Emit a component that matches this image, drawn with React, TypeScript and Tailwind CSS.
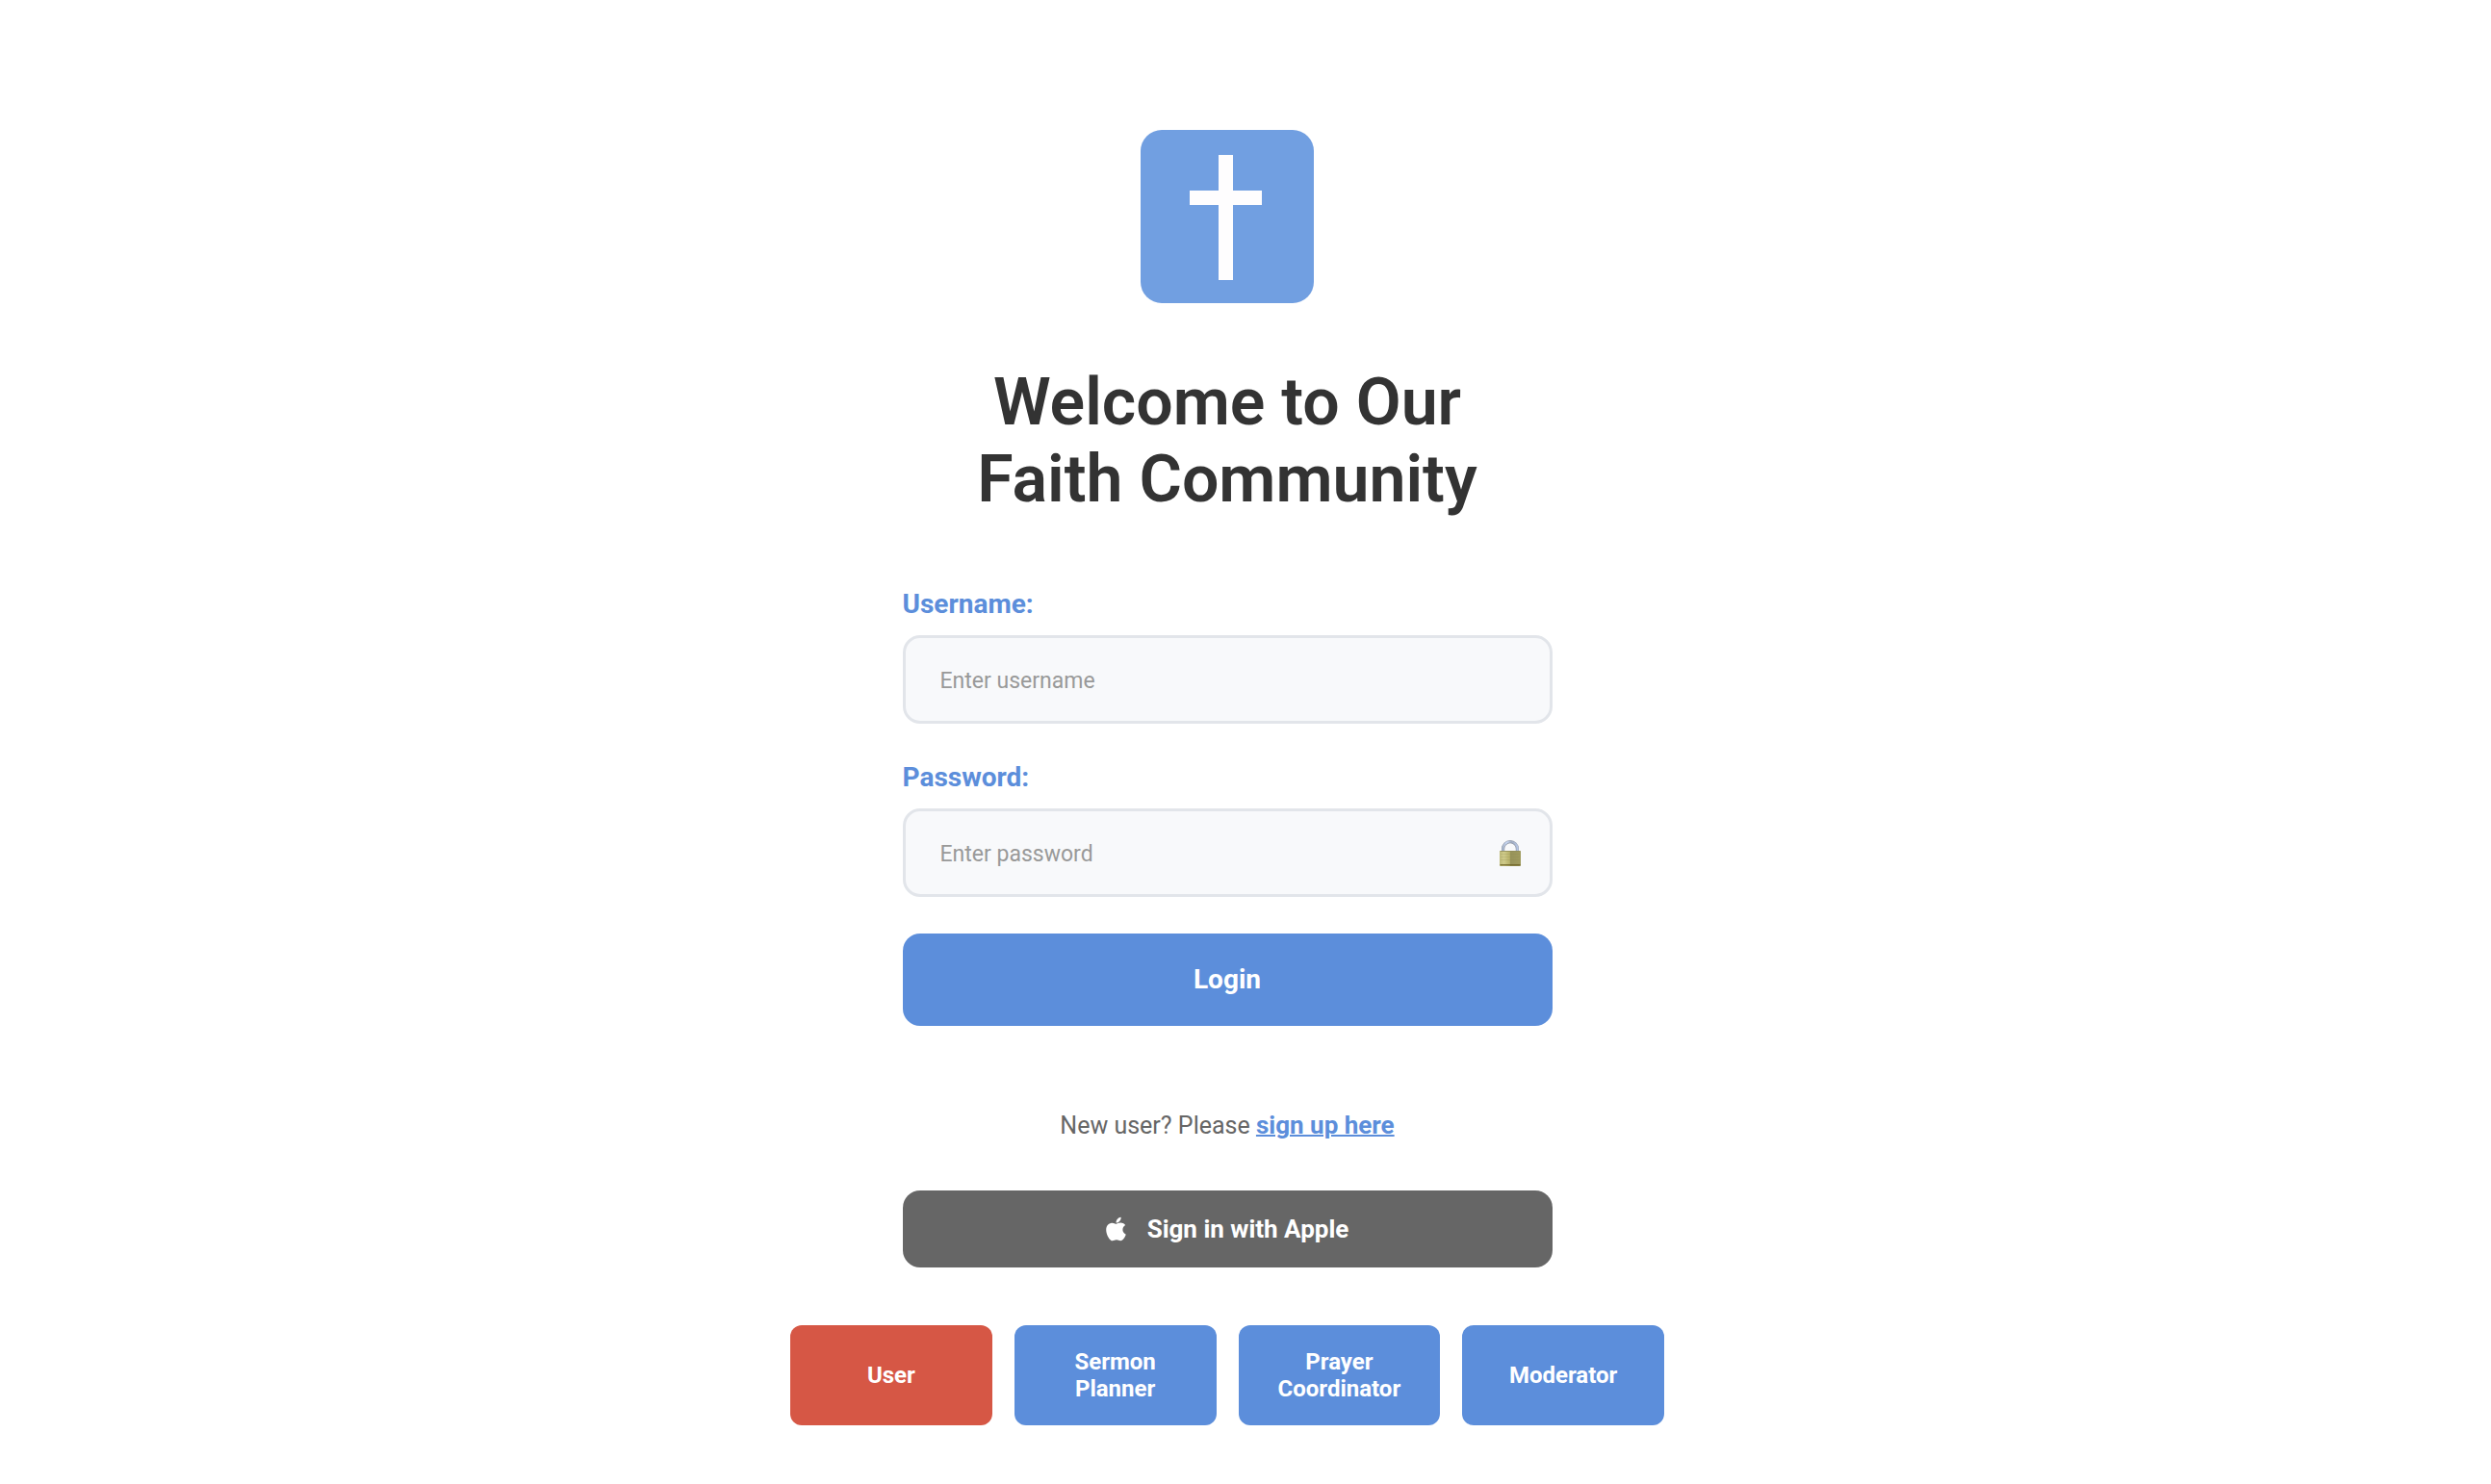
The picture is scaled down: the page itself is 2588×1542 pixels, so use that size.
import { FaApple } from "react-icons/fa";

const roles = [
  { label: "User", active: true },
  { label: "Sermon Planner", active: false },
  { label: "Prayer Coordinator", active: false },
  { label: "Moderator", active: false },
];

function CrossLogo() {
  return (
    <svg viewBox="0 0 180 180" className="size-[180px]" role="img" aria-label="Cross">
      <rect width="180" height="180" rx="22" fill="#719fe1" />
      <path d="M81 26h15v37h30v15H96v78H81V78H51V63h30z" fill="#fefdfe" />
    </svg>
  );
}

function LockIcon() {
  return (
    <svg viewBox="0 0 22 27" className="h-[27px] w-[22px]" aria-hidden="true">
      <defs>
        <linearGradient id="lock-body" x1="0" x2="1" y1="0" y2="0">
          <stop offset="0" stopColor="#bdb978" />
          <stop offset="0.2" stopColor="#cfcb8a" />
          <stop offset="0.47" stopColor="#b8b26a" />
          <stop offset="0.52" stopColor="#97935a" />
          <stop offset="1" stopColor="#a09b5e" />
        </linearGradient>
        <linearGradient id="lock-shackle" x1="0" x2="1" y1="0" y2="0">
          <stop offset="0" stopColor="#a9b6cc" />
          <stop offset="0.25" stopColor="#c9d8f4" />
          <stop offset="0.6" stopColor="#9fabc0" />
          <stop offset="1" stopColor="#b6c6e4" />
        </linearGradient>
      </defs>
      <path d="M3.6 12V9a7.4 7.4 0 0 1 14.8 0v3" fill="none" stroke="#8c94a3" strokeWidth="3.2" />
      <path d="M3.5 12V9a7.5 7.5 0 0 1 15 0v3" fill="none" stroke="url(#lock-shackle)" strokeWidth="2.2" />
      <rect y="11" width="22" height="16" rx="1" fill="url(#lock-body)" />
      <path d="M0.5 11.5h21" stroke="#8f8b58" strokeWidth="0.8" />
      <path d="M1 14.5h20M1 17.5h20M1 20.5h20" stroke="#8d8850" strokeOpacity="0.25" strokeWidth="0.8" />
      <path d="M0.5 25.8h21" stroke="#6d6226" strokeWidth="1.2" />
    </svg>
  );
}

const labelClass = "text-[28px] leading-9 font-bold text-[#5c8edb]";
const inputClass =
  "h-[92px] w-full rounded-[18px] border-3 border-[#e2e5ea] bg-[#f8f9fb] px-9 pt-0.5 text-[23px] text-[#333] placeholder:text-[#999] outline-none focus:border-[#5c8edb]";

export default function App() {
  return (
    <main className="flex min-h-screen flex-col items-center bg-white pt-[135px] pr-[38px] pb-[60px] font-['Roboto',sans-serif]">
      <CrossLogo />
      <h1 className="mt-[63px] text-center text-[68px] leading-[80px] font-semibold text-[#333]">
        Welcome to Our
        <br />
        Faith Community
      </h1>

      <form className="mt-[72px] flex w-full max-w-[675px] flex-col gap-[38px]" onSubmit={(e) => e.preventDefault()}>
        <div className="flex flex-col gap-[14px]">
          <label htmlFor="username" className={labelClass}>
            Username:
          </label>
          <input id="username" type="text" placeholder="Enter username" className={inputClass} />
        </div>
        <div className="flex flex-col gap-[14px]">
          <label htmlFor="password" className={labelClass}>
            Password:
          </label>
          <div className="relative">
            <input id="password" type="password" placeholder="Enter password" className={inputClass} />
            <span className="pointer-events-none absolute inset-y-0 right-[33px] flex items-center">
              <LockIcon />
            </span>
          </div>
        </div>
        <button type="submit" className="h-24 rounded-[18px] bg-[#5c8edb] text-[28px] font-bold text-white">
          Login
        </button>
      </form>

      <p className="mt-[87px] text-[25px] leading-8 text-[#666]">
        New user? Please{" "}
        <a href="#signup" className="text-[26px] font-bold text-[#5c8edb] underline decoration-2">
          sign up here
        </a>
      </p>

      <button
        type="button"
        className="mt-[51px] flex h-20 w-full max-w-[675px] items-center justify-center gap-[22px] rounded-[18px] bg-[#666] text-[26px] font-bold text-white"
      >
        <FaApple className="h-7 w-[21px]" aria-hidden="true" />
        Sign in with Apple
      </button>

      <div className="mt-[60px] grid w-full max-w-[908px] grid-cols-4 gap-[23px]">
        {roles.map((role) => (
          <button
            key={role.label}
            type="button"
            aria-pressed={role.active}
            className={`h-[104px] rounded-xl px-10 text-[24px] leading-7 font-bold text-white ${
              role.active ? "bg-[#d65745]" : "bg-[#5c8edb]"
            }`}
          >
            {role.label}
          </button>
        ))}
      </div>
    </main>
  );
}
